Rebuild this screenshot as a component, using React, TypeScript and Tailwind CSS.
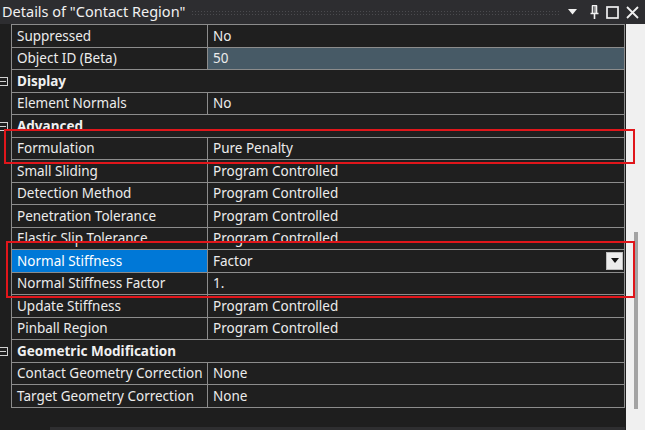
import React from "react";

type Row =
  | { kind: "section"; label: string }
  | { kind: "prop"; label: string; value: string; valueTint?: boolean; selected?: boolean; dropdown?: boolean };

const rows: Row[] = [
  { kind: "prop", label: "Suppressed", value: "No" },
  { kind: "prop", label: "Object ID (Beta)", value: "50", valueTint: true },
  { kind: "section", label: "Display" },
  { kind: "prop", label: "Element Normals", value: "No" },
  { kind: "section", label: "Advanced" },
  { kind: "prop", label: "Formulation", value: "Pure Penalty" },
  { kind: "prop", label: "Small Sliding", value: "Program Controlled" },
  { kind: "prop", label: "Detection Method", value: "Program Controlled" },
  { kind: "prop", label: "Penetration Tolerance", value: "Program Controlled" },
  { kind: "prop", label: "Elastic Slip Tolerance", value: "Program Controlled" },
  { kind: "prop", label: "Normal Stiffness", value: "Factor", selected: true, dropdown: true },
  { kind: "prop", label: "Normal Stiffness Factor", value: "1." },
  { kind: "prop", label: "Update Stiffness", value: "Program Controlled" },
  { kind: "prop", label: "Pinball Region", value: "Program Controlled" },
  { kind: "section", label: "Geometric Modification" },
  { kind: "prop", label: "Contact Geometry Correction", value: "None" },
  { kind: "prop", label: "Target Geometry Correction", value: "None" },
];

function CollapseBox() {
  return (
    <svg width="10" height="9" viewBox="0 0 10 9" className="-ml-[2px]">
      <rect x="0.5" y="0.5" width="9" height="8" fill="none" stroke="#d0d0d0" />
      <line x1="2" y1="4.5" x2="8" y2="4.5" stroke="#d0d0d0" />
    </svg>
  );
}

function PropRow({ row }: { row: Row }) {
  if (row.kind === "section") {
    return (
      <div className="flex h-[22.5px]">
        <div className="w-[11px] flex items-center">
          <CollapseBox />
        </div>
        <div className="flex-1 flex items-center border-x border-b border-[#8c8c8c] bg-[#1f1f1f] px-[5px] font-bold text-[#f0f0f0]">
          {row.label}
        </div>
      </div>
    );
  }
  return (
    <div className="flex h-[22.5px]">
      <div className="w-[11px]" />
      <div className="flex-1 flex border-x border-b border-[#8c8c8c] bg-[#1f1f1f] text-[#ececec]">
        <div
          className={`w-[196px] shrink-0 flex items-center px-[5px] border-r border-[#8c8c8c] whitespace-nowrap overflow-hidden ${
            row.selected ? "bg-[#0078d7] text-white" : ""
          }`}
        >
          {row.label}
        </div>
        <div
          className={`flex-1 flex items-center pl-[5px] pr-[1px] ${row.valueTint ? "bg-[#475a66]" : ""}`}
        >
          <span className="flex-1">{row.value}</span>
          {row.dropdown && (
            <div className="w-[17px] h-[18px] bg-[#ececec] border border-[#bdbdbd] flex items-center justify-center">
              <svg width="8" height="5" viewBox="0 0 8 5">
                <path d="M0 0H8L4 5Z" fill="#111" />
              </svg>
            </div>
          )}
        </div>
      </div>
    </div>
  );
}

function TitleIcons() {
  return (
    <div className="flex items-center gap-[7px] pr-[6px] text-[#f0f0f0]">
      <svg width="9" height="6" viewBox="0 0 9 6">
        <path d="M0 0H9L4.5 5.5Z" fill="#f0f0f0" />
      </svg>
      <svg width="9" height="14" viewBox="0 0 9 14" className="ml-[6px]">
        <path d="M2 0.5H7M2.5 0.5V8M6.5 0.5V8M0.5 8.5H8.5M4.5 8.5V14" stroke="#f0f0f0" strokeWidth="1.6" fill="none" />
        <path d="M5 1V8" stroke="#f0f0f0" strokeWidth="1" />
      </svg>
      <svg width="13" height="13" viewBox="0 0 13 13">
        <rect x="1" y="1" width="11" height="11" fill="none" stroke="#f0f0f0" strokeWidth="1.7" />
      </svg>
      <svg width="13" height="13" viewBox="0 0 13 13">
        <path d="M1 1L12 12M12 1L1 12" stroke="#f0f0f0" strokeWidth="1.8" />
      </svg>
    </div>
  );
}

export default function App() {
  return (
    <div
      className="relative w-[645px] h-[430px] overflow-hidden bg-[#1e1e1e] flex flex-col text-[13.5px]"
      style={{ fontFamily: '"Noto Sans", "Open Sans", sans-serif' }}
    >
      <div className="h-[24px] shrink-0 flex items-center bg-[#2d2d30]">
        <span className="pl-[2px] pr-[6px] text-[14.5px] text-[#f1f1f1] whitespace-nowrap">
          Details of "Contact Region"
        </span>
        <div className="flex-1 h-[5px] mr-[8px] bg-[radial-gradient(circle,#4a4a4e_0.8px,transparent_1px)] bg-[length:3px_3px]" />
        <TitleIcons />
      </div>
      <div className="flex-1 flex min-h-0">
        <div className="w-[625px] flex flex-col">
          <div className="h-[1px] ml-[11px] bg-[#8c8c8c]" />
          {rows.map((r, i) => (
            <PropRow key={i} row={r} />
          ))}
          <div className="flex-1" />
          <div className="h-[3px] ml-[50px] bg-[#2e2e30]" />
        </div>
        <div className="w-[1px]" />
        <div className="flex-1 bg-[#f0f0f0] flex flex-col items-center pb-[21px]">
          <div className="w-[4px] mt-[208px] flex-1 bg-[#a3a3a3] ml-[1px]" />
        </div>
      </div>

      <div className="absolute left-[4px] top-[129px] w-[631px] h-[35px] border-2 border-[#e0161b]" />
      <div className="absolute left-[6px] top-[241px] w-[629px] h-[57px] border-2 border-[#e0161b]" />
    </div>
  );
}
